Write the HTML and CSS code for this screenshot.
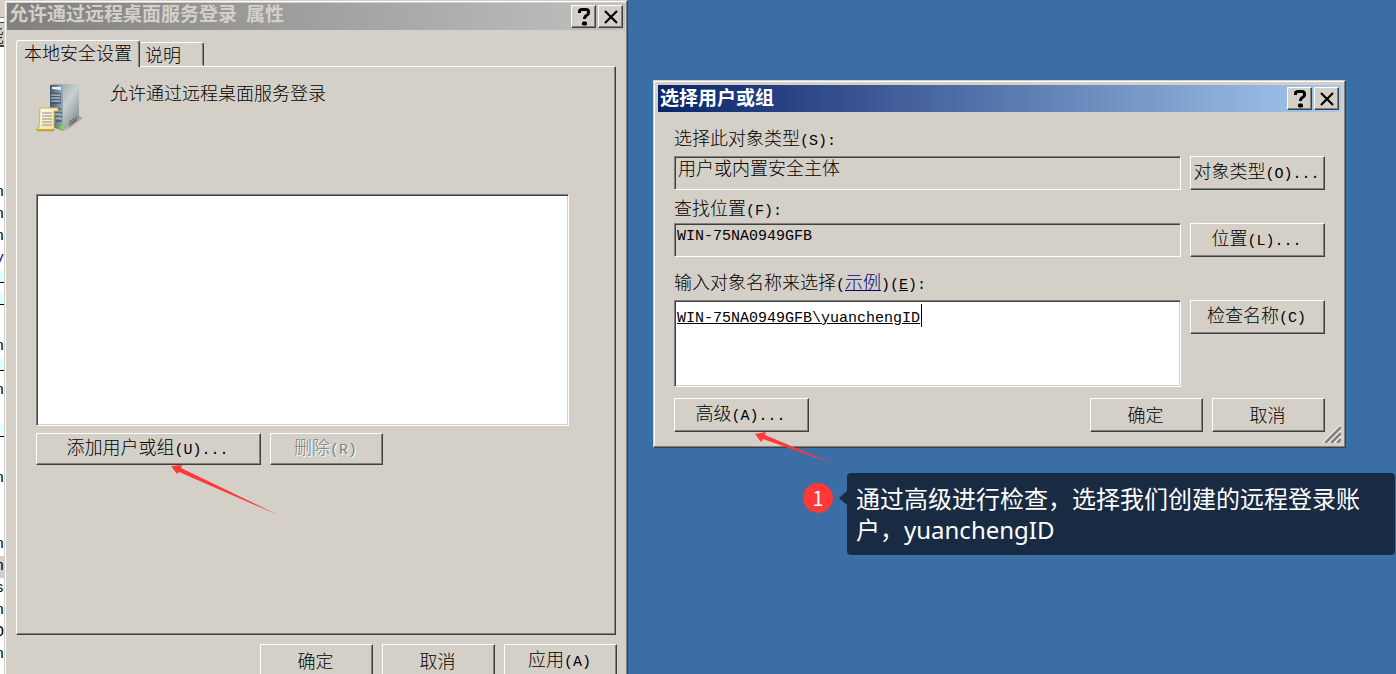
FILE: index.html
```html
<!DOCTYPE html>
<html lang="zh-CN">
<head>
    <meta charset="UTF-8">
    <meta name="viewport" content="width=device-width, initial-scale=1.0">
    <title>允许通过远程桌面服务登录 属性</title>
    <link rel="stylesheet" href="styles.css">
</head>
<body>
    <main class="desktop">
        <!-- edge of the window behind -->
        <div class="behind">
            <div class="behind-head"></div>
            <div class="behind-column">能</div>
            <div class="behind-rows">
                <span>n</span>
                <span>n</span>
                <span>n</span>
                <span class="blue">y</span>
                <span class="line"></span>
                <span class="line"></span>
                <span></span>
                <span>n</span>
                <span class="line"></span>
                <span>n</span>
                <span></span>
                <span class="line"></span>
                <span></span>
                <span>n</span>
                <span></span>
                <span></span>
                <span>n</span>
                <span class="active">n</span>
                <span>s</span>
                <span>n</span>
                <span>O</span>
                <span>n</span>
            </div>
        </div>

        <section class="window properties">
            <header class="title-bar inactive">
                <h1>允许通过远程桌面服务登录<span class="en"> </span>属性</h1>
                <button class="title-button" type="button" aria-label="帮助">
                    <svg width="14" height="18" viewBox="0 0 14 18"><path d="M2.500 5V3.500Q2.500 1.500 5 1.500H9Q11.500 1.500 11.500 4V5Q11.500 6.500 9.500 7.500Q7.500 8.500 7.500 11" fill="none" stroke="#000" stroke-width="3"/><path d="M6 13.500h3l1 1v2l-1 1H6l-1-1v-2z"/></svg>
                </button>
                <button class="title-button" type="button" aria-label="关闭">
                    <svg width="14" height="14" viewBox="0 0 14 14"><path d="M1 1l12 12M13 1L1 13" stroke="#000" stroke-width="2.200"/></svg>
                </button>
            </header>
            <div class="properties-body">
                <div class="tabs">
                    <button class="tab selected" type="button">本地安全设置</button>
                    <button class="tab" type="button">说明</button>
                </div>
                <div class="panel">
                    <div class="policy">
                        <svg width="48" height="50" viewBox="0 0 48 50">
                            <defs>
                                <linearGradient id="side" x1="0" y1="0" x2="1" y2="1">
                                    <stop offset="0" stop-color="#8d999b"/>
                                    <stop offset="0.5" stop-color="#c8d0d0"/>
                                    <stop offset="1" stop-color="#6f7b7e"/>
                                </linearGradient>
                                <linearGradient id="front" x1="0" y1="0" x2="1" y2="0">
                                    <stop offset="0" stop-color="#46586a"/>
                                    <stop offset="1" stop-color="#9aabb8"/>
                                </linearGradient>
                                <linearGradient id="paper" x1="0" y1="0" x2="1" y2="1">
                                    <stop offset="0" stop-color="#fffdf0"/>
                                    <stop offset="1" stop-color="#f2e08c"/>
                                </linearGradient>
                            </defs>
                            <path d="M28 49l19-14-4-2z" fill="#aaa69f"/>
                            <path d="M14 2l4-1h25v34L27 48z" fill="url(#side)"/>
                            <path d="M14 2h13v46l-13-5z" fill="url(#front)"/>
                            <path d="M16 4h9v3l-9-1z" fill="#e4f1f8"/>
                            <path d="M15 11h10M15 14h10M15 17h10M15 20h10M15 26h10M18 30h8M20 34h6M20 38h6" stroke="#2e3d4b"/>
                            <path d="M15 12h9M15 15h9M15 18h9M18 31h7M20 35h5" stroke="#c4d2da"/>
                            <path d="M33 39l8-5M33 41l8-5M33 43l8-6" stroke="#59666b"/>
                            <rect x="24" y="43" width="3" height="3" fill="#6dea16"/>
                            <path d="M4 25h17q2 0 1 3h-4v20H2q-3-1-1-3h2z" fill="url(#paper)" stroke="#c8b356"/>
                            <path d="M1 46h17v2H1z" fill="#c5a43b"/>
                            <path d="M6 30h10M6 33h10M6 36h10M6 39h10M6 42h10" stroke="#928d96"/>
                        </svg>
                        <p>允许通过远程桌面服务登录</p>
                    </div>
                    <div class="list-box" role="listbox" aria-label="用户或组"></div>
                    <div class="list-actions">
                        <button class="button add" type="button">添加用户或组<span class="en">(U)...</span></button>
                        <button class="button" type="button" disabled>删除<span class="en">(R)</span></button>
                    </div>
                </div>
                <footer class="properties-footer">
                    <button class="button" type="button">确定</button>
                    <button class="button" type="button">取消</button>
                    <button class="button" type="button">应用<span class="en">(A)</span></button>
                </footer>
            </div>
        </section>

        <section class="window dialog">
            <header class="title-bar">
                <h2>选择用户或组</h2>
                <button class="title-button" type="button" aria-label="帮助">
                    <svg width="14" height="18" viewBox="0 0 14 18"><path d="M2.500 5V3.500Q2.500 1.500 5 1.500H9Q11.500 1.500 11.500 4V5Q11.500 6.500 9.500 7.500Q7.500 8.500 7.500 11" fill="none" stroke="#000" stroke-width="3"/><path d="M6 13.500h3l1 1v2l-1 1H6l-1-1v-2z"/></svg>
                </button>
                <button class="title-button" type="button" aria-label="关闭">
                    <svg width="14" height="14" viewBox="0 0 14 14"><path d="M1 1l12 12M13 1L1 13" stroke="#000" stroke-width="2.200"/></svg>
                </button>
            </header>
            <form class="dialog-body">
                <label for="objectType">选择此对象类型<span class="en">(S):</span></label>
                <div class="row">
                    <input class="field" id="objectType" type="text" value="用户或内置安全主体" readonly>
                    <button class="button" type="button">对象类型<span class="en">(O)...</span></button>
                </div>
                <label for="location">查找位置<span class="en">(F):</span></label>
                <div class="row">
                    <input class="field en" id="location" type="text" value="WIN-75NA0949GFB" readonly>
                    <button class="button" type="button">位置<span class="en">(L)...</span></button>
                </div>
                <div class="names-label">
                    <label for="names">输入对象名称来选择</label><span class="en">(</span><a href="#">示例</a><span class="en">)(<u>E</u>):</span>
                </div>
                <div class="row">
                    <div class="names">
                        <textarea class="field en" id="names" spellcheck="false">WIN-75NA0949GFB\yuanchengID</textarea>
                        <i class="caret"></i>
                    </div>
                    <button class="button" type="button">检查名称<span class="en">(C)</span></button>
                </div>
                <div class="dialog-footer">
                    <button class="button advanced" type="button">高级<span class="en">(A)...</span></button>
                    <button class="button" type="submit">确定</button>
                    <button class="button" type="button">取消</button>
                </div>
            </form>
            <svg class="grip" width="18" height="18" viewBox="0 0 18 18"><path d="M0 18L18 0M6 18L18 6M12 18l6-6" stroke="#fff" stroke-width="1.500"/><path d="M2 18L18 2M8 18L18 8M14 18l4-4" stroke="#808080" stroke-width="2.500"/></svg>
        </section>

        <!-- annotations -->
        <svg class="arrow arrow-add" width="108" height="51" viewBox="0 0 108 51"><path d="M0 1L11 0l-1 3L107 50 8 7 6 9z"/></svg>
        <svg class="arrow arrow-advanced" width="80" height="33" viewBox="0 0 80 33"><path d="M0 2L11 0l-1 3L79 32 8 7 6 10z"/></svg>
        <aside class="note">
            <span class="note-number">1</span>
            <svg class="note-pointer" width="8" height="14" viewBox="0 0 8 14"><path d="M8 0v14L0 7z"/></svg>
            <p>通过高级进行检查，选择我们创建的远程登录账户，yuanchengID</p>
        </aside>
    </main>
</body>
</html>
```
FILE: styles.css
```css
* {
    box-sizing: border-box;
}
body {
    margin: 0;
    font-family: "Noto Sans CJK SC", sans-serif;
    font-size: 18px;
    font-weight: 300;
    line-height: 18px;
    color: #000;
}
h1, h2, p {
    margin: 0;
}
svg {
    display: block;
    flex: none;
}
.desktop {
    position: relative;
    height: 100vh;
    overflow: hidden;
    background-color: #3a6ea5;
}
.en {
    font-family: "Liberation Mono", monospace;
    font-size: 15px;
    font-weight: 400;
}

/* window behind */
.behind {
    width: 4px;
    height: 100%;
    overflow: hidden;
    background-color: #fff;
}
.behind-head {
    height: 23px;
    background-color: #d4d0c8;
    border-bottom: 1px solid #404040;
    box-shadow: inset 0 -4px #fff, inset 0 -5px #808080;
}
.behind-column {
    display: flex;
    align-items: center;
    justify-content: flex-end;
    height: 24px;
    background-color: #d4d0c8;
    border-bottom: 2px solid #404040;
}
.behind-rows {
    padding-top: 135px;
}
.behind-rows span {
    display: flex;
    justify-content: flex-end;
    height: 22px;
    font-family: "Liberation Mono", monospace;
    font-size: 15px;
    line-height: 22px;
}
.behind-rows .blue {
    color: #000080;
}
.behind-rows .line {
    background: linear-gradient(#fff 1px, #e0ffff 1px 12px, #000 12px 13px, #fff 13px);
}
.behind-rows .active {
    background-color: #d4d0c8;
}

/* windows */
.window {
    position: absolute;
    background-color: #d4d0c8;
    border: 1px solid;
    border-color: #d4d0c8 #404040 #404040 #d4d0c8;
    box-shadow: inset -1px -1px #808080, inset 1px 1px #fff;
}
.title-bar {
    display: flex;
    align-items: center;
    gap: 2px;
    height: 27px;
    padding: 0 2px;
    color: #fff;
    background: linear-gradient(to right, #0a246a, #a6caf0);
}
.title-bar.inactive {
    color: #d4d0c8;
    background: linear-gradient(to right, #808080, #c0c0c0);
}
.title-bar h1, .title-bar h2 {
    flex: 1;
    padding-bottom: 4px;
    font-size: 19px;
    font-weight: 700;
    line-height: 23px;
    white-space: nowrap;
}
.title-button {
    display: flex;
    align-items: center;
    justify-content: center;
    width: 25px;
    height: 23px;
    padding: 0;
    background-color: #d4d0c8;
    border: 1px solid;
    border-color: #fff #404040 #404040 #fff;
    box-shadow: inset -1px -1px #808080;
}
.button {
    min-width: 113px;
    height: 34px;
    padding: 0 4px 2px 2px;
    font-family: inherit;
    font-size: 18px;
    font-weight: 300;
    line-height: 20px;
    color: #000;
    white-space: nowrap;
    background-color: #d4d0c8;
    border: 1px solid;
    border-color: #fff #404040 #404040 #fff;
    box-shadow: inset -1px -1px #808080;
}
.button:disabled {
    color: #808080;
    text-shadow: 1px 1px #fff;
}

/* properties window */
.properties {
    left: 4px;
    top: 0;
    width: 624px;
    padding: 2px;
}
.properties-body {
    padding: 10px 8px 10px 9px;
}
.tabs {
    display: flex;
    align-items: flex-end;
    height: 26px;
}
.tab {
    height: 24px;
    padding: 0 22px 1px 4px;
    font-family: inherit;
    font-size: 18px;
    font-weight: 300;
    line-height: 20px;
    color: #000;
    background-color: #d4d0c8;
    border: 1px solid;
    border-color: #fff #404040 transparent transparent;
    border-radius: 3px 3px 0 0;
    box-shadow: inset -1px 0 #808080;
}
.tab.selected {
    height: 27px;
    margin-bottom: -1px;
    padding: 0 7px 4px 7px;
    border-left-color: #fff;
    border-bottom: 0;
}
.panel {
    margin-right: 1px;
    padding: 16px 46px 169px 19px;
    border: 1px solid;
    border-color: #fff #404040 #404040 #fff;
    box-shadow: inset -1px -1px #808080;
}
.policy {
    display: flex;
    gap: 26px;
    height: 111px;
}
.list-box {
    height: 232px;
    background-color: #fff;
    border: 1px solid;
    border-color: #808080 #fff #fff #808080;
    box-shadow: inset 1px 1px #404040, inset -1px -1px #d4d0c8;
}
.list-actions {
    display: flex;
    gap: 9px;
    padding-top: 7px;
}
.list-actions .button {
    height: 32px;
}
.list-actions .add {
    width: 225px;
}
.properties-footer {
    display: flex;
    justify-content: flex-end;
    gap: 9px;
    padding-top: 9px;
}

/* select users dialog */
.dialog {
    left: 653px;
    top: 80px;
    width: 693px;
    padding: 4px;
}
.dialog-body {
    display: flex;
    flex-direction: column;
    padding: 16px 16px 11px;
}
.dialog-body > label {
    height: 28px;
}
.row {
    display: flex;
    align-items: flex-start;
    gap: 9px;
    margin-bottom: 8px;
}
.row .button, .advanced {
    width: 135px;
}
.field {
    display: block;
    flex: 1;
    width: 100%;
    height: 34px;
    margin: 0;
    padding: 1px 2px 9px;
    color: #000;
    background-color: #d4d0c8;
    border: 1px solid;
    border-color: #808080 #fff #fff #808080;
    border-radius: 0;
    box-shadow: inset 1px 1px #404040;
    outline: none;
}
input.field:not(.en) {
    padding: 0 3px 12px;
    font-family: inherit;
    font-size: 18px;
    font-weight: 300;
}
.dialog-body > label[for="location"] {
    height: 25px;
}
.names-label {
    display: flex;
    align-items: baseline;
    height: 28px;
    margin-top: 7px;
}
.names-label a {
    color: #00007f;
}
.names {
    position: relative;
    flex: 1;
}
.names .field {
    height: 87px;
    padding: 8px 2px;
    line-height: 20px;
    text-decoration: underline;
    background-color: #fff;
    box-shadow: inset 1px 1px #404040, inset -1px -1px #d4d0c8;
    resize: none;
}
.caret {
    position: absolute;
    left: 247px;
    top: 4px;
    width: 1px;
    height: 23px;
    background-color: #000;
}
.dialog-footer {
    display: flex;
    gap: 9px;
    padding-top: 3px;
}
.advanced {
    margin-right: auto;
}
.grip {
    position: absolute;
    right: 4px;
    bottom: 4px;
}

/* annotations */
.arrow {
    position: absolute;
    fill: #ff3838;
}
.arrow-add {
    left: 171px;
    top: 465px;
}
.arrow-advanced {
    left: 755px;
    top: 432px;
}
.note {
    position: absolute;
    left: 803px;
    right: 1px;
    top: 473px;
    display: flex;
}
.note-number {
    flex: none;
    width: 30px;
    height: 30px;
    margin: 10px 6px 0 0;
    font-size: 20px;
    font-weight: 400;
    line-height: 29px;
    text-align: center;
    color: #fff;
    background-color: #ff3838;
    border-radius: 50%;
}
.note-pointer {
    margin-top: 18px;
    fill: #182b43;
}
.note p {
    flex: 1;
    padding: 10px 30px 10px 9px;
    font-family: "Noto Sans", "Noto Sans CJK SC", sans-serif;
    font-size: 24px;
    font-weight: 400;
    line-height: 31px;
    color: #fff;
    background-color: #182b43;
    border-radius: 4px;
}
```
